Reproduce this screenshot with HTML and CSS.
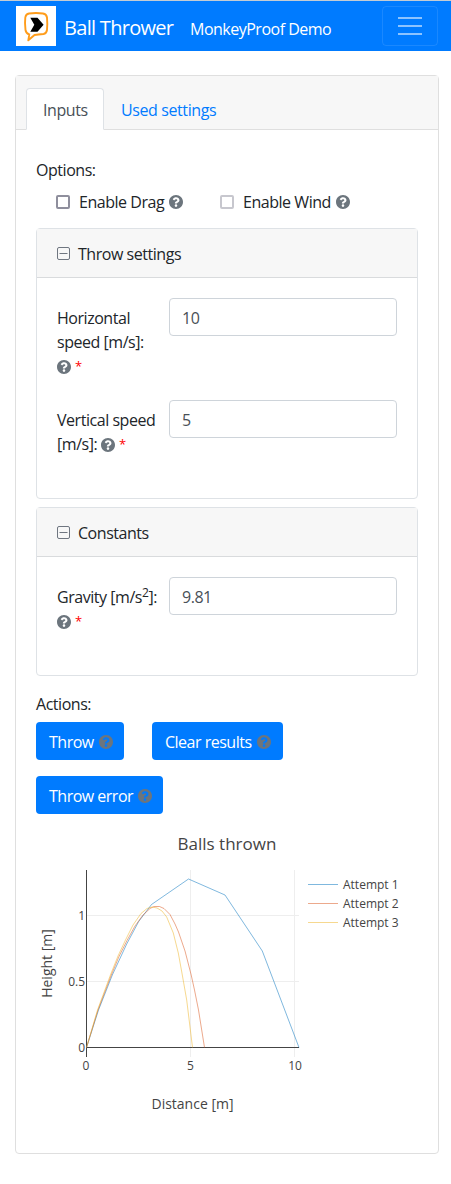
FILE: index.html
```html
<!DOCTYPE html>
<html lang="en">
<head>
<meta charset="utf-8">
<title>Ball Thrower</title>
<link rel="stylesheet" href="styles.css">
</head>
<body>
<svg class="defs" width="0" height="0" aria-hidden="true">
  <symbol id="help" viewBox="8 8 496 496"><path fill="currentColor" d="M504 256c0 137-111 248-248 248S8 393 8 256 119 8 256 8s248 111 248 248zM262.700 90c-54.500 0-89.300 23-116.500 63.800-3.500 5.300-2.400 12.400 2.700 16.300l34.700 26.300c5.200 3.900 12.600 3 16.700-2.100 17.900-22.700 30.100-35.800 57.300-35.800 20.400 0 45.700 13.100 45.700 33 0 15-12.400 22.700-32.500 34C247.100 238.500 216 254.900 216 296v4c0 6.600 5.400 12 12 12h56c6.600 0 12-5.400 12-12v-1.300c0-28.500 83.200-29.600 83.200-106.700 0-58-60.200-102-116.500-102zM256 338c-25.400 0-46 20.600-46 46s20.600 46 46 46 46-20.600 46-46-20.600-46-46-46z"/></symbol>
  <symbol id="minus" viewBox="0 0 13 13"><rect x=".5" y=".5" width="12" height="12" rx="1.500" fill="none" stroke="#6f7680"/><path d="M2.500 6.500h8" stroke="#6f7680"/></symbol>
</svg>
<nav class="navbar">
  <svg class="logo" viewBox="0 0 40 40"><rect width="40" height="40" fill="#fff"/><path d="M13 7.500Q20 6.500 27 7.500Q30.500 8 31 11.500Q31.600 18 31 24Q30.500 27.500 27.500 28Q22 28.700 18.500 29L12.300 34.300L13.300 28.300Q10 27.500 9.500 24Q8.600 17 9.300 11.500Q9.800 8 13 7.500Z" fill="none" stroke="#ff9c1a" stroke-width="1.900" stroke-linejoin="round"/><path d="M14.300 11.800H21.500L27.600 18.700L21.500 25.800H14.300L18.300 18.800Z"/></svg>
  <span class="brand">Ball Thrower</span>
  <span class="sub">MonkeyProof Demo</span>
  <button class="toggler" aria-label="Menu"><svg width="24" height="18" viewBox="0 0 24 18"><path d="M0 1h24M0 9h24M0 17h24" stroke="#fff" stroke-opacity=".55" stroke-width="2"/></svg></button>
</nav>
<main class="card main">
  <div class="tabs"><span class="tab active">Inputs</span><span class="tab used">Used settings</span></div>
  <div class="body">
    <div class="line">Options:</div>
    <div class="options">
      <label class="check drag"><i class="box"></i><span>Enable Drag</span><svg class="help"><use href="#help"/></svg></label>
      <label class="check"><i class="box off"></i><span>Enable Wind</span><svg class="help"><use href="#help"/></svg></label>
    </div>
    <section class="card group throw">
      <header class="head"><svg class="minus"><use href="#minus"/></svg><span>Throw settings</span></header>
      <div class="fields">
        <div class="field"><label class="name">Horizontal<br>speed [m/s]:<br><svg class="help"><use href="#help"/></svg><b class="req">*</b></label><div class="input">10</div></div>
        <div class="field"><label class="name">Vertical speed<br>[m/s]: <svg class="help"><use href="#help"/></svg><b class="req">*</b></label><div class="input">5</div></div>
      </div>
    </section>
    <section class="card group constants">
      <header class="head"><svg class="minus"><use href="#minus"/></svg><span class="cons">Constants</span></header>
      <div class="fields">
        <div class="field"><label class="name">Gravity [m/s<sup>2</sup>]:<br><svg class="help"><use href="#help"/></svg><b class="req">*</b></label><div class="input">9.81</div></div>
      </div>
    </section>
    <div class="line actions">Actions:</div>
    <div class="buttons">
      <button class="btn b1"><span>Throw</span><svg class="help"><use href="#help"/></svg></button>
      <button class="btn b2"><span>Clear results</span><svg class="help"><use href="#help"/></svg></button>
      <button class="btn b3"><span>Throw error</span><svg class="help"><use href="#help"/></svg></button>
    </div>
    <svg class="chart" viewBox="36 822 382 320">
      <path class="grid" d="M190.500 870V1057M294.500 870V1057M87 915.500H299M87 981.500H299"/>
      <path class="axis" d="M86.500 870V1057M86 1047.500H299"/>
      <g class="curves">
        <path stroke="#0072bd" d="M86.500 1047.500L98.500 1010L112.300 975L126.700 944L138.700 921.500L151.500 904.500L188.500 879L225 895L262.300 951L299 1047.500"/>
        <path stroke="#d95319" d="M86.500 1047.500L98 1010L111.300 975L119 956.500L127 940.500L135 926L143 915L150 908.500L154 906.500L159.500 906.500L164 908.500L170 914.500L175 924L178.500 932L185 951L191.200 975L194.500 990L198.500 1010L204.500 1047.500"/>
        <path stroke="#edb120" d="M86.500 1047.500L97.500 1010L110.800 974L118 956L125.500 940L133 925L141 913.500L147 908.500L152 907L157 908L162 911L166.700 917L173.300 933L178.300 953L182.300 975L186.700 1000L192.500 1047.500"/>
      </g>
      <text class="title" x="227" y="850" text-anchor="middle">Balls thrown</text>
      <g class="ticks">
        <text x="85" y="920" text-anchor="end">1</text>
        <text x="85" y="986" text-anchor="end">0.5</text>
        <text x="85" y="1052" text-anchor="end">0</text>
        <text x="86" y="1070" text-anchor="middle">0</text>
        <text x="190.500" y="1070" text-anchor="middle">5</text>
        <text x="295" y="1070" text-anchor="middle">10</text>
        <text x="343" y="889">Attempt 1</text>
        <text x="343" y="908">Attempt 2</text>
        <text x="343" y="927">Attempt 3</text>
      </g>
      <g class="curves"><path stroke="#0072bd" d="M308 884.500h30"/><path stroke="#d95319" d="M308 903.500h30"/><path stroke="#edb120" d="M308 922.500h30"/></g>
      <text class="label" x="192.500" y="1109" text-anchor="middle">Distance [m]</text>
      <text class="label" transform="translate(52 963.500) rotate(-90)" text-anchor="middle">Height [m]</text>
    </svg>
  </div>
</main>
</body>
</html>
```
FILE: styles.css
```css
* { box-sizing: border-box; }
body {
  margin: 0;
  background: #fff;
  color: #212529;
  font: 16px/24px "Open Sans", "Noto Sans", sans-serif;
  letter-spacing: -0.46px;
}
.defs { display: block; }
.navbar {
  display: flex;
  align-items: center;
  height: 51px;
  padding: 0 13px 0 16px;
  border-top: 1px solid #c4ccd4;
  background: #007bff;
  color: #fff;
}
.logo { width: 40px; height: 40px; }
.brand { width: 126px; margin-left: 8px; font-size: 20px; letter-spacing: -0.7px; padding-top: 3px; white-space: nowrap; }
.sub { padding-top: 6px; letter-spacing: -0.5px; white-space: nowrap; }
.toggler {
  display: flex;
  align-items: center;
  justify-content: center;
  width: 56px;
  height: 40px;
  margin-left: auto;
  padding: 0;
  border: 1px solid rgba(255, 255, 255, .1);
  border-radius: 4px;
  background: none;
}
.card { border: 1px solid #dfdfdf; border-radius: 4px; background: #fff; }
.main { height: 1079px; margin: 24px 12px 0 15px; }
.tabs {
  display: flex;
  align-items: flex-end;
  height: 54px;
  padding-left: 10px;
  border-bottom: 1px solid #dfdfdf;
  background: #f7f7f7;
}
.tab { height: 42px; padding: 9px 16px; border: 1px solid transparent; color: #007bff; letter-spacing: -0.4px; white-space: nowrap; }
.tab.active {
  width: 78px;
  margin-bottom: -1px;
  border-color: #dee2e6 #dee2e6 #fff;
  border-radius: 4px 4px 0 0;
  background: #fff;
  color: #495057;
}
.tab.used { margin-bottom: -1px; }
.body { padding: 28px 20px 0; }
.options { display: flex; height: 24px; margin: 8px 0 14px; padding-left: 20px; }
.check { display: flex; align-items: center; white-space: nowrap; }
.check.drag { width: 164px; }
.check span { margin-left: 9px; }
.box { width: 14px; height: 14px; border: 2px solid #8f8f9d; border-radius: 2px; }
.box.off { border-color: #c7c7ce; }
.help { width: 14px; height: 14px; color: #6c757d; overflow: visible; }
.check .help { margin-left: 5px; }
.group { border-color: #dee2e6; margin-bottom: 8px; }
.throw { height: 271px; }
.constants { height: 169px; }
.head {
  display: flex;
  align-items: center;
  height: 49px;
  padding: 2px 20px 0;
  border-bottom: 1px solid #d9dbdd;
  background: #f7f7f7;
}
.head .minus { width: 13px; height: 13px; margin: -1px 8px 0 0; }
.fields { padding: 20px; }
.field { display: flex; align-items: flex-start; height: 72px; margin-bottom: 30px; }
.name { width: 112px; padding-top: 8px; white-space: nowrap; }
.name .help { vertical-align: -2px; }
.name sup { font-size: 12px; line-height: 0; vertical-align: 6px; }
.req { margin-left: 4px; color: #f00; font-size: 13px; line-height: 0; font-weight: 400; vertical-align: 1px; }
.input {
  flex: 1;
  height: 38px;
  padding: 7px 12px;
  border: 1px solid #ced4da;
  border-radius: 4px;
  color: #495057;
}
.actions { padding-top: 8px; height: 38px; }
.buttons { display: flex; flex-wrap: wrap; gap: 16px 28px; }
.btn {
  display: flex;
  align-items: center;
  height: 38px;
  padding: 2px 0 0 13px;
  border: 0;
  border-radius: 4px;
  background: #007bff;
  color: #fff;
  font: inherit;
  letter-spacing: -0.5px;
  white-space: nowrap;
}
.btn .help { margin-left: 5px; }
.b1 { width: 88px; }
.b2 { width: 131px; }
.b3 { width: 127px; }
.chart { display: block; width: 382px; height: 320px; margin-top: 8px; letter-spacing: 0; fill: #444; }
.grid { fill: none; stroke: #eee; }
.axis { fill: none; stroke: #444; }
.curves { fill: none; stroke-opacity: .5; stroke-width: 1; }
.title { font-size: 17px; }
.ticks { font-size: 12px; }
.label { font-size: 14px; }
```
